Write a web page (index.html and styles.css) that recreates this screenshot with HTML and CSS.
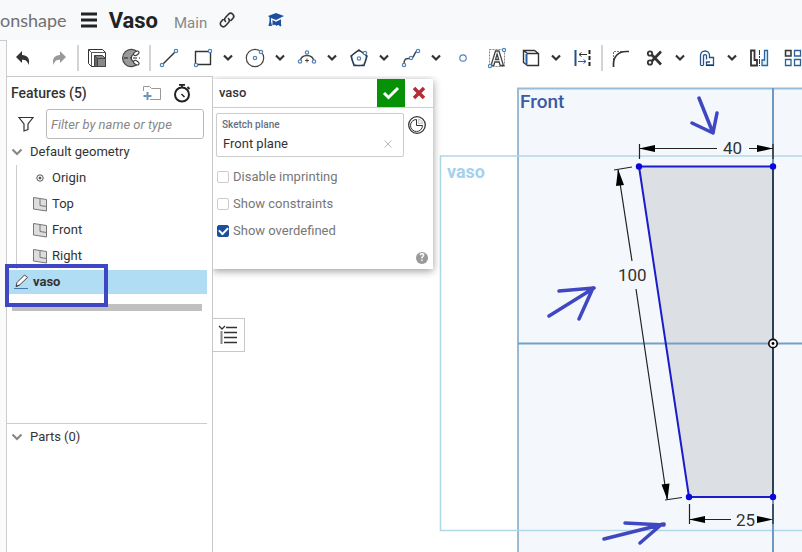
FILE: index.html
```html
<!DOCTYPE html>
<html lang="en">
<head>
<meta charset="utf-8">
<title>Vaso</title>
<link rel="stylesheet" href="styles.css">
</head>
<body>
<header class="topbar">
  <span class="brand">onshape</span>
  <button class="menu" aria-label="Menu"><svg width="16" height="16"><path d="M0 2h16M0 8h16M0 14h16" stroke="#222" stroke-width="3"/></svg></button>
  <h1 class="doc-name">Vaso</h1>
  <span class="branch">Main</span>
  <button class="link-btn" aria-label="Copy link"><svg width="16" height="16" fill="none" stroke="#333" stroke-width="1.6" stroke-linecap="round"><path d="M6.5 9.5a3 3 0 0 1 0-4l3-3.2a3 3 0 0 1 4.3 4.2L12 8.4M9.500 6.500a3 3 0 0 1 0 4l-3 3.200a3 3 0 0 1-4.300-4.200L4 7.600"/></svg></button>
  <button class="learn-btn" aria-label="Learning center"><svg width="18" height="16" fill="#1c509f"><path d="M9 1l8 3-8 4-5-2v3.500l1 4.500H1.500l1-4.500V5.200L1 4z"/><path d="M5.500 8L9 9.700 14 7.300V12q1 2-1 2.500-1.500-2.500-3.500-.5-1.500-2-4-.500z"/></svg></button>
</header>
<div class="workspace">
  <div class="gutter"></div>
  <div class="editor">
    <div class="toolbar" role="toolbar" aria-label="Sketch tools">
      <button class="tool" aria-label="Undo"><svg class="ic"><path d="M3 11l6-6v4c5 0 8.500 3.500 6.500 10-1-4-3-5.200-6.500-5.200V17z" fill="#333"/></svg></button>
      <button class="tool" aria-label="Redo"><svg class="ic"><path d="M19 11l-6-6v4c-5 0-8.500 3.500-6.500 10 1-4 3-5.200 6.500-5.200V17z" fill="#999"/></svg></button>
      <span class="sep"></span>
      <button class="tool" aria-label="Extrude"><svg class="ic"><path d="M3.500 3.500h14l3 3v14h-14l-3-3z" fill="#fff" stroke="#333"/><path d="M3.500 3.500l3 3h14M6.500 6.500v14" fill="none" stroke="#555"/><path d="M9.500 9.500l3 3v8h-3z" fill="#666" stroke="#444"/><path d="M9.500 9.500h8l3 3v8h-8v-8z" fill="#888" stroke="#444"/><path d="M12.500 12.500h8" stroke="#444"/></svg></button>
      <button class="tool" aria-label="Revolve"><svg class="ic"><path d="M19 6.500a8.700 8.700 0 1 0 0 11l-4-1.500a4.300 4.300 0 0 1 0-8z" fill="#999" stroke="#444" stroke-width="1.200"/><ellipse cx="17.300" cy="7.300" rx="3" ry="1.800" transform="rotate(-35 17.300 7.300)" fill="#fff" stroke="#333"/><ellipse cx="17.300" cy="16.700" rx="3" ry="1.800" transform="rotate(35 17.300 16.700)" fill="#fff" stroke="#333"/><path d="M5 12h17" stroke="#222" stroke-dasharray="4 2 1 2"/></svg></button>
      <span class="sep"></span>
      <button class="tool" aria-label="Line"><svg class="ic"><path d="M6 18L18 6" stroke="#333" stroke-width="1.500"/><g class="pt"><circle cx="5" cy="19" r="1.700"/><circle cx="19" cy="5" r="1.700"/></g></svg></button>
      <button class="tool" aria-label="Rectangle"><svg class="ic"><path d="M4.500 5.500h15v13h-15z" fill="none" stroke="#333" stroke-width="1.400"/><g class="pt"><circle cx="19" cy="5" r="1.700"/><circle cx="5" cy="19" r="1.700"/></g></svg></button>
      <button class="more" aria-label="More rectangles"><svg width="12" height="8"><path d="M2 1.500l4 4 4-4"/></svg></button>
      <button class="tool" aria-label="Circle"><svg class="ic"><circle cx="12" cy="12" r="8.700" fill="none" stroke="#444" stroke-width="1.200"/><g class="pt"><circle cx="12" cy="12" r="1.700"/><circle cx="18" cy="6" r="1.700"/></g></svg></button>
      <button class="more" aria-label="More circles"><svg width="12" height="8"><path d="M2 1.500l4 4 4-4"/></svg></button>
      <button class="tool" aria-label="Arc"><svg class="ic"><path d="M5 15A7.200 7.200 0 0 1 19 15" fill="none" stroke="#444" stroke-width="1.500"/><path d="M10 14.500h4M12 12.500v4" stroke="#543"/><g class="pt"><circle cx="5" cy="15.500" r="1.700"/><circle cx="19" cy="15.500" r="1.700"/><circle cx="12" cy="6.500" r="1.700"/></g></svg></button>
      <button class="more" aria-label="More arcs"><svg width="12" height="8"><path d="M2 1.500l4 4 4-4"/></svg></button>
      <button class="tool" aria-label="Polygon"><svg class="ic"><circle cx="12" cy="12.500" r="7.300" fill="none" stroke="#69b"/><path d="M12 4l8 6-3 9.500H7L4 10z" fill="none" stroke="#2b3a50" stroke-width="1.500"/><g class="pt"><circle cx="12" cy="12.500" r="1.700"/><circle cx="18" cy="7" r="1.700"/></g></svg></button>
      <button class="more" aria-label="More polygons"><svg width="12" height="8"><path d="M2 1.500l4 4 4-4"/></svg></button>
      <button class="tool" aria-label="Spline"><svg class="ic"><path d="M5 18c0-9 6-3 9-7s1-5 5-6" fill="none" stroke="#444" stroke-width="1.500"/><g class="pt"><circle cx="5" cy="19" r="1.700"/><circle cx="12" cy="12" r="1.700"/><circle cx="19" cy="5" r="1.700"/></g></svg></button>
      <button class="more" aria-label="More splines"><svg width="12" height="8"><path d="M2 1.500l4 4 4-4"/></svg></button>
      <button class="tool" aria-label="Point"><svg class="ic pt"><circle cx="12" cy="12" r="3.200"/></svg></button>
      <button class="tool" aria-label="Text"><svg class="ic"><path d="M4.500 3.500h15v17h-15z" fill="none" stroke="#888" stroke-dasharray="2 1"/><path d="M6 19.500L10.500 5h3.500l4.500 14.500h-3.300l-1-3.500h-4.400l-1 3.500zM10.500 13.500h3.200l-1.600-5.500z" fill="#fff" stroke="#444" stroke-width="1.300"/><g class="pt"><circle cx="19" cy="4" r="1.600"/><circle cx="5" cy="20" r="1.600"/></g></svg></button>
      <button class="tool" aria-label="Use"><svg class="ic"><path d="M4.500 4.500h11l4 3v12h-11l-4-3zM4.500 4.500l4 3h11" fill="none" stroke="#333" stroke-width="1.400"/><path d="M7.500 8v10.500" stroke="#2460a8" stroke-width="2"/></svg></button>
      <button class="more" aria-label="More projections"><svg width="12" height="8"><path d="M2 1.500l4 4 4-4"/></svg></button>
      <button class="tool" aria-label="Dimension"><svg class="ic"><path d="M4.500 4v16" stroke="#205090" stroke-width="2"/><path d="M18.500 4v16" stroke="#222" stroke-width="2" stroke-dasharray="4 2"/><path d="M16 8.500H8m2.500-2L8 8.500l2.500 2" stroke="#333" fill="none"/><path d="M7 15.500h8m-2.500-2l2.500 2-2.500 2" stroke="#2460a8" fill="none"/></svg></button>
      <span class="sep"></span>
      <button class="tool" aria-label="Fillet"><svg class="ic"><path d="M4.500 14V5.500H14" fill="none" stroke="#777" stroke-dasharray="2 1"/><path d="M4.500 21v-3C4.500 10 10 5.500 17 5.500h3" fill="none" stroke="#333" stroke-width="1.700"/></svg></button>
      <button class="tool" aria-label="Trim"><svg class="ic"><g fill="none" stroke="#333"><circle cx="7" cy="7.500" r="2.200" stroke-width="1.800"/><circle cx="7" cy="16.500" r="2.200" stroke-width="1.800"/><path d="M9 15l9-9.500M9 9l9 9.500" stroke-width="2.600"/></g></svg></button>
      <button class="more" aria-label="More trims"><svg width="12" height="8"><path d="M2 1.500l4 4 4-4"/></svg></button>
      <button class="tool" aria-label="Offset"><svg class="ic"><path d="M5.500 19V9.500a4.500 4.500 0 0 1 9 0v2h4v7.500h-7v-3h3.500M8.500 19V9.500a1.700 1.700 0 0 1 3 0v4" fill="none" stroke="#265487" stroke-width="1.300"/><path d="M5.500 19.500h3M11 19.500h8" stroke="#333"/></svg></button>
      <button class="more" aria-label="More offsets"><svg width="12" height="8"><path d="M2 1.500l4 4 4-4"/></svg></button>
      <button class="tool" aria-label="Mirror"><svg class="ic"><path d="M4 4.500h3.500v9.500h2.500v5.500H4z" fill="#fff" stroke="#333" stroke-width="1.800"/><path d="M12.500 4v16" stroke="#333" stroke-dasharray="5 1 2 1"/><path d="M20.500 4.500H17.500v9.500H15v5.500h5.500z" fill="#d9effa" stroke="#2867a0" stroke-width="1.300"/></svg></button>
      <button class="tool" aria-label="Pattern"><svg class="ic"><path d="M4.500 4.500h5.500v5.500H4.500z" fill="#eee" stroke="#333" stroke-width="1.500"/><path d="M13.500 4.500h6v5.500h-6zM4.500 13.500h5.500v6H4.500zM13.500 13.500h6v6h-6z" fill="#fff" stroke="#2b6194" stroke-width="1.300"/></svg></button>
    </div>
    <main class="stage">
      <aside class="panel">
        <section class="features">
          <div class="panel-head">
            <h2>Features (5)</h2>
            <button class="head-btn" aria-label="Add folder"><svg width="20" height="18" fill="none"><path d="M1.500 7V2.500h6l2 2h9v11H8" stroke="#999"/><path d="M5.500 8v8M1.500 12h8" stroke="#6e93b8" stroke-width="2"/></svg></button>
            <button class="head-btn" aria-label="Regeneration times"><svg width="20" height="20" fill="none" stroke="#222"><circle cx="10" cy="11.500" r="7" stroke-width="2"/><path d="M7 1.800h6M10 2v3M15.500 4l2 2" stroke-width="1.800"/><path d="M9.500 11l3 3" stroke-width="1.500"/></svg></button>
          </div>
          <div class="filter">
            <svg width="16" height="16" fill="none" stroke="#333" stroke-width="1.200"><path d="M1 1.500h14L10 8v5.500l-4 1.500V8z"/></svg>
            <input type="text" aria-label="Filter features" placeholder="Filter by name or type">
          </div>
          <div class="row group"><svg class="caret" width="12" height="8"><path d="M1.500 1.500L6 6l4.500-4.500"/></svg>Default geometry</div>
          <ul class="tree">
            <li class="row"><svg width="16" height="16" fill="none" stroke="#555"><circle cx="8" cy="8" r="3.200"/><circle cx="8" cy="8" r="1" fill="#333"/></svg>Origin</li>
            <li class="row"><svg width="16" height="16"><path d="M1.500 1.500l13 2v11.500l-13-2z" fill="#ddd" stroke="#777"/><path d="M8 3v6.500l6.500 1" fill="none" stroke="#777"/></svg>Top</li>
            <li class="row"><svg width="16" height="16"><path d="M1.500 1.500l13 2v11.500l-13-2z" fill="#ddd" stroke="#777"/><path d="M8 3v6.500l6.500 1" fill="none" stroke="#777"/></svg>Front</li>
            <li class="row"><svg width="16" height="16"><path d="M1.500 1.500l13 2v11.500l-13-2z" fill="#ddd" stroke="#777"/><path d="M8 3v6.500l6.500 1" fill="none" stroke="#777"/></svg>Right</li>
          </ul>
          <div class="row selected"><svg width="16" height="16" fill="none"><path d="M3 12.500l1-4L11.500 1l3 2.500-8 7.500z" fill="#fff" stroke="#444"/><path d="M3 12.500l3.500-1.500" stroke="#333"/><path d="M1 14.500h14" stroke="#4678b0"/></svg>vaso<span class="highlight"></span></div>
          <div class="rollback"></div>
        </section>
        <section class="parts">
          <div class="row group"><svg class="caret" width="12" height="8"><path d="M1.500 1.500L6 6l4.500-4.500"/></svg>Parts (0)</div>
        </section>
      </aside>
      <div class="canvas">
        <svg class="drawing" role="img" aria-label="Sketch">
          <g transform="translate(-213 -76)">
            <rect x="518" y="88.500" width="4000" height="4000" fill="#f4f8fc" stroke="#99bbd5" stroke-width="2"/>
            <rect x="440.500" y="156" width="4000" height="374.500" fill="none" stroke="#b1d8e8" stroke-width="1.500"/>
            <path d="M639 166H773V497H689z" fill="#dcdfe4"/>
            <path d="M518 343.500H4000" stroke="#759fc4" stroke-width="2"/>
            <path d="M773 88V4000" stroke="#6f98c2" stroke-width="2"/>
            <path d="M773 166V497" stroke="#2c3f56" stroke-width="2"/>
            <path d="M773 166.500H639L689 497H773" fill="none" stroke="#1c1cc8" stroke-width="2"/>
            <g fill="#0808dc"><circle cx="639" cy="166.500" r="3.200"/><circle cx="773" cy="166.500" r="3.200"/><circle cx="689" cy="497" r="3.200"/><circle cx="773" cy="497" r="3.200"/></g>
            <g stroke="#222" stroke-width="1.200" fill="none"><path d="M639.500 144v15M773 144v15M640 148.500h77M749 148.500h24M614 170l18-3M618 170l14 91M636 289l31 210M665 500l17-2.500M689.500 504v20M773 504v20M690 519.500h41"/></g>
            <path d="M639 148.500l16-3.500v7zM773 148.500l-16-3.500v7zM618 169l-2 17 8-1zM667.500 500l-6-15.500 8-1zM689 519.500l16-3.500v7zM773 519.500l-16-3.500v7z"/>
            <circle cx="773" cy="343.500" r="4.200" fill="#fff" stroke="#111" stroke-width="1.700"/><circle cx="773" cy="343.500" r="1.400"/>
            <g class="dims"><text x="723" y="154">40</text><text x="618" y="281">100</text><text x="736" y="526">25</text></g>
            <text class="plane-name" x="520" y="108">Front</text>
            <text class="sketch-name" x="447" y="178">vaso</text>
            <g fill="none" stroke="#4047c2" stroke-width="3.500" stroke-linecap="round" stroke-linejoin="round"><path d="M699 98l14 35M692 123l21 10 4-20M549 316l45-28M559 291l35-3M579 319l14-31M604 539l60-15M625 523l39 2M640 543l22-19"/></g>
          </g>
        </svg>
        <button class="list-tab" aria-label="Toggle feature list"><svg width="20" height="20" fill="none"><path d="M1 1l3 3 3-3M8 2.500h11M6 7.500h13M6 12.500h13M6 17.500h13" stroke="#333" stroke-width="1.300"/><path d="M3.500 6v13" stroke="#888" stroke-width="2"/></svg></button>
        <form class="dialog" aria-label="Sketch">
          <div class="dialog-head">
            <span class="dialog-title">vaso</span>
            <button type="button" class="accept" aria-label="Accept"><svg width="18" height="16"><path d="M2 8l4.500 4.500L16 3" fill="none" stroke="#fff" stroke-width="3"/></svg></button>
            <button type="button" class="cancel" aria-label="Cancel"><svg width="14" height="14"><path d="M2 2l10 10M12 2L2 12" stroke="#b62c36" stroke-width="3.500"/></svg></button>
          </div>
          <div class="plane-row">
            <div class="plane-box">
              <label for="plane">Sketch plane</label>
              <div class="plane-value"><input id="plane" type="text" value="Front plane"><button type="button" class="clear" aria-label="Clear plane"><svg width="10" height="10"><path d="M1.500 1.500l7 7M8.500 1.500l-7 7" stroke="#b5b5b5"/></svg></button></div>
            </div>
            <button type="button" class="final" aria-label="Show final"><svg width="18" height="18" fill="none" stroke="#333"><circle cx="9" cy="9" r="8.300" stroke-width="1.300"/><path d="M8.500 3.500v6h6A6 6 0 1 1 8.500 3.500z"/><path d="M10.500 3v4.500H15A6 6 0 0 0 10.500 3z" fill="#eee" stroke="#ccc"/></svg></button>
          </div>
          <label class="check"><input type="checkbox">Disable imprinting</label>
          <label class="check"><input type="checkbox">Show constraints</label>
          <label class="check"><input type="checkbox" checked>Show overdefined</label>
          <button type="button" class="help" aria-label="Help">?</button>
        </form>
      </div>
    </main>
  </div>
</div>
</body>
</html>
```
FILE: styles.css
```css
* { box-sizing: border-box; }
body {
  margin: 0;
  height: 100vh;
  display: flex;
  flex-direction: column;
  overflow: hidden;
  background: #fff;
  color: #333;
  font: 13px/20px Roboto, "Liberation Sans", sans-serif;
}
button { margin: 0; padding: 0; border: 0; background: none; display: flex; align-items: center; justify-content: center; font: inherit; flex: none; }
h1, h2, ul { margin: 0; padding: 0; }
svg { flex: none; display: block; }

.topbar { height: 40px; flex: none; display: flex; align-items: center; background: #f8f9fb; }
.brand { font: 18px/38px Lato, sans-serif; color: #707070; margin-right: 14px; }
.doc-name { font-size: 22px; line-height: 40px; color: #222; margin: 2px 16px 0 12px; }
.branch { font-size: 15px; line-height: 40px; color: #888; margin: 6px 12px 0 0; }
.learn-btn { margin-left: 32px; }

.workspace { flex: 1; display: flex; min-height: 0; }
.gutter { width: 7px; flex: none; background: #fafafa; border-top: 1px solid #ccc; border-right: 1px solid #ccc; }
.editor { flex: 1; min-width: 0; display: flex; flex-direction: column; }

.toolbar { height: 36px; flex: none; display: flex; align-items: center; padding-left: 1px; overflow: hidden; }
.tool { width: 34px; height: 36px; }
.ic { width: 24px; height: 24px; }
.pt { fill: #fff; stroke: #5584b8; stroke-width: 1.2; }
.more { width: 16px; height: 36px; margin-right: 2px; }
.more path { fill: none; stroke: #333; stroke-width: 2.2; }
.sep { width: 2px; height: 26px; margin: 0 1px; background: #d4d4d4; flex: none; }

.stage { flex: 1; display: flex; min-height: 0; }
.panel { width: 206px; flex: none; border: 1px solid #c8c8c8; border-width: 1px 1px 0 0; padding-right: 5px; display: flex; flex-direction: column; }
.features { height: 347px; flex: none; border-bottom: 1px solid #ccc; }
.panel-head { display: flex; align-items: center; height: 32px; padding: 0 15px 0 4px; gap: 10px; }
.panel-head h2 { flex: 1; font-size: 14px; font-weight: 500; }
.filter { display: flex; align-items: center; gap: 12px; padding: 0 3px 0 11px; height: 30px; }
.filter input { flex: 1; min-width: 0; height: 30px; padding: 0 4px; border: 1px solid #bbb; border-radius: 3px; font: italic 13px/20px Roboto, sans-serif; color: #333; }
.filter input::placeholder { color: #888; opacity: 1; }
.row { display: flex; align-items: center; height: 26px; }
.group { padding-left: 4px; gap: 7px; }
.caret path { fill: none; stroke: #888; stroke-width: 2.2; }
.tree { list-style: none; margin-left: 9px; border-left: 1px solid #ccc; }
.tree .row { padding-left: 15px; gap: 4px; }
.selected { position: relative; height: 24px; margin-top: 1px; padding-left: 6px; gap: 4px; background: #b0dcf4; font-weight: 700; }
.highlight { position: absolute; left: -2px; top: -6px; width: 103px; height: 43px; border: 4px solid #4047c2; }
.rollback { height: 7px; margin: 10px 5px 0; background: #c0c0c0; }

.canvas { position: relative; flex: 1; min-width: 0; overflow: hidden; }
.drawing { width: 100%; height: 100%; }
.dims text { font-size: 17px; fill: #333; }
.plane-name { font-size: 19px; fill: #3a5ba5; font-weight: 500; }
.sketch-name { font-size: 18px; fill: #a3d1ee; font-weight: 700; }
.list-tab { position: absolute; left: -1px; top: 242px; width: 33px; height: 34px; border: 1px solid #c8c8c8; border-left: 0; background: #fff; }

.dialog { position: absolute; left: 0; top: 3px; width: 220px; background: #fff; box-shadow: 0 2px 8px rgba(0, 0, 0, .4); padding-bottom: 5px; }
.dialog-head { display: flex; height: 29px; border-bottom: 1px solid #ccc; }
.dialog-title { flex: 1; padding-left: 6px; line-height: 28px; font-weight: 500; }
.accept { width: 28px; background: #079107; }
.cancel { width: 28px; }
.plane-row { display: flex; align-items: flex-start; gap: 4px; padding: 5px 3px 6px; }
.plane-box { width: 188px; height: 44px; border: 1px solid #ccc; border-radius: 2px; padding: 2px 10px 0 5px; }
.plane-box label { display: block; font-size: 10px; line-height: 18px; font-weight: 500; color: #666f80; }
.plane-value { display: flex; align-items: center; justify-content: space-between; }
.plane-value input { width: 120px; height: 20px; padding: 0 1px; border: 0; font: inherit; color: #333; }
.final { margin-top: 3px; }
.check { display: flex; align-items: center; height: 27px; padding-left: 4px; gap: 4px; color: #777; }
.check input { appearance: none; width: 12px; height: 12px; margin: 0; border: 1px solid #ccc; border-radius: 2px; background: #fff; display: grid; place-items: center; }
.check input:checked { background: #1c509f; border-color: #1c509f; }
.check input:checked::after { content: ""; width: 7px; height: 4px; border: solid #fff; border-width: 0 0 2px 2px; transform: translateY(-1px) rotate(-45deg); }
.help { width: 12px; height: 12px; border-radius: 6px; margin: 8px 5px 0 auto; background: #999; color: #fff; font-size: 10px; line-height: 12px; font-weight: 700; }
```
